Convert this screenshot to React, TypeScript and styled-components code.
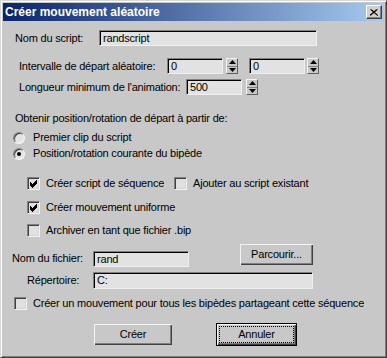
import { createGlobalStyle, styled } from "styled-components";

const GlobalStyle = createGlobalStyle`
  html, body {
    margin: 0;
    padding: 0;
    background: #c8c8c8;
  }
  body {
    font-family: "Liberation Sans", Arial, sans-serif;
    font-size: 11px;
    letter-spacing: -0.2px;
    color: #000;
  }
`;

const Window = styled.div`
  width: 387px;
  height: 358px;
  box-sizing: border-box;
  background: #c8c8c8;
  border-top: 1px solid #d8d8d8;
  border-left: 1px solid #d8d8d8;
  border-right: 1px solid #404040;
  border-bottom: 1px solid #404040;
  box-shadow: inset 1px 1px 0 #ffffff, inset -1px -1px 0 #808080;
  padding: 2px;
  display: flex;
  flex-direction: column;
`;

const TitleBar = styled.div`
  height: 18px;
  display: flex;
  align-items: center;
  justify-content: space-between;
  padding: 0 2px 0 2px;
  background: linear-gradient(to right, #0a246a, #a6caf0);
`;

const Title = styled.span`
  color: #fff;
  font-weight: bold;
  font-size: 12px;
  letter-spacing: 0;
`;

const CloseButton = styled.div`
  width: 16px;
  height: 14px;
  box-sizing: border-box;
  background: #d4d0c8;
  border-top: 1px solid #fff;
  border-left: 1px solid #fff;
  border-right: 1px solid #404040;
  border-bottom: 1px solid #404040;
  box-shadow: inset -1px -1px 0 #808080;
  display: flex;
  align-items: center;
  justify-content: center;
`;

const Body = styled.div`
  display: flex;
  flex-direction: column;
`;

const Row = styled.div<{ $top: number; $indent: number; $height?: number; $align?: string }>`
  display: flex;
  align-items: ${(p) => p.$align ?? "center"};
  margin-top: ${(p) => p.$top}px;
  padding-left: ${(p) => p.$indent}px;
  height: ${(p) => p.$height ?? 13}px;
`;

const Label = styled.span<{ $width?: number }>`
  width: ${(p) => (p.$width ? `${p.$width}px` : "auto")};
  flex: none;
  white-space: nowrap;
  line-height: 13px;
`;

const TextInput = styled.div<{ $width: number; $height?: number; $gap?: number }>`
  width: ${(p) => p.$width}px;
  height: ${(p) => p.$height ?? 16}px;
  margin-left: ${(p) => p.$gap ?? 0}px;
  box-sizing: border-box;
  flex: none;
  background: #e2e2e2;
  border-top: 1px solid #808080;
  border-left: 1px solid #808080;
  border-right: 1px solid #f0f0f0;
  border-bottom: 1px solid #f0f0f0;
  box-shadow: inset 1px 1px 0 #000;
  padding: 0 0 0 3px;
  display: flex;
  align-items: center;
  line-height: 13px;
`;

const Spinner = styled.div<{ $gap: number }>`
  width: 12px;
  height: 16px;
  margin-left: ${(p) => p.$gap}px;
  flex: none;
  box-sizing: border-box;
  background: #c8c8c8;
  border-top: 1px solid #f4f4f4;
  border-left: 1px solid #f4f4f4;
  border-right: 1px solid #606060;
  border-bottom: 1px solid #606060;
  display: flex;
  flex-direction: column;
`;

const SpinHalf = styled.div<{ $divider?: boolean }>`
  flex: 1;
  display: flex;
  align-items: center;
  justify-content: center;
  border-bottom: ${(p) => (p.$divider ? "1px solid #808080" : "none")};
`;

const Box = styled.div<{ $gap?: number }>`
  width: 13px;
  height: 13px;
  flex: none;
  margin-left: ${(p) => p.$gap ?? 0}px;
  margin-right: 6px;
  box-sizing: border-box;
  background: #e0e0e0;
  border-top: 1px solid #808080;
  border-left: 1px solid #808080;
  border-right: 1px solid #f4f4f4;
  border-bottom: 1px solid #f4f4f4;
  box-shadow: inset 1px 1px 0 #404040, inset -1px -1px 0 #d4d4d4;
  display: flex;
  align-items: center;
  justify-content: center;
`;

const Radio = styled.div<{ $on?: boolean }>`
  width: 12px;
  height: 12px;
  flex: none;
  margin-right: 8px;
  box-sizing: border-box;
  border-radius: 50%;
  background: #e4e4e4;
  border-top: 1px solid #808080;
  border-left: 1px solid #808080;
  border-right: 1px solid #f8f8f8;
  border-bottom: 1px solid #f8f8f8;
  box-shadow: inset 1px 1px 0 #404040;
  display: flex;
  align-items: center;
  justify-content: center;
  &::after {
    content: "";
    display: ${(p) => (p.$on ? "block" : "none")};
    width: 4px;
    height: 4px;
    border-radius: 50%;
    background: #000;
  }
`;

const Button = styled.div<{ $width: number; $gap?: number; $focus?: boolean }>`
  width: ${(p) => p.$width}px;
  height: 23px;
  margin-left: ${(p) => p.$gap ?? 0}px;
  flex: none;
  box-sizing: border-box;
  background: #c8c8c8;
  border: 1px solid ${(p) => (p.$focus ? "#000" : "#c8c8c8")};
  box-shadow: inset 1px 1px 0 #f4f4f4, inset -1px -1px 0 #404040, inset -2px -2px 0 #808080;
  display: flex;
  align-items: center;
  justify-content: center;
  padding: 3px;
`;

const ButtonFace = styled.span<{ $focus?: boolean }>`
  flex: 1;
  align-self: stretch;
  display: flex;
  align-items: center;
  justify-content: center;
  outline: ${(p) => (p.$focus ? "1px dotted #000" : "none")};
  line-height: 13px;
`;

const Check = () => (
  <svg width="9" height="9" viewBox="0 0 9 9">
    <path d="M1 3.5 L3.5 6 L8 1.5 M1 4.5 L3.5 7 L8 2.5 M1 5.5 L3.5 8 L8 3.5" stroke="#000" strokeWidth="1" fill="none" shapeRendering="crispEdges" />
  </svg>
);

const Arrow = ({ up }: { up?: boolean }) => (
  <svg width="7" height="4" viewBox="0 0 7 4">
    <path d={up ? "M3.5 0 L7 4 L0 4 Z" : "M0 0 L7 0 L3.5 4 Z"} fill="#000" />
  </svg>
);

const Spin = ({ gap }: { gap: number }) => (
  <Spinner $gap={gap}>
    <SpinHalf $divider>
      <Arrow up />
    </SpinHalf>
    <SpinHalf>
      <Arrow />
    </SpinHalf>
  </Spinner>
);

export default function App() {
  return (
    <>
      <GlobalStyle />
      <Window>
        <TitleBar>
          <Title>Créer mouvement aléatoire</Title>
          <CloseButton>
            <svg width="8" height="7" viewBox="0 0 8 7">
              <path d="M0.5 0.5 L7.5 6.5 M1.5 0.5 L8 6.5 M7.5 0.5 L0.5 6.5 M6.5 0.5 L-0.5 6.5" stroke="#000" strokeWidth="1" />
            </svg>
          </CloseButton>
        </TitleBar>
        <Body>
          <Row $top={9} $indent={12} $height={16}>
            <Label $width={84}>Nom du script:</Label>
            <TextInput $width={218}>randscript</TextInput>
          </Row>
          <Row $top={12} $indent={16} $height={16}>
            <Label $width={148}>Intervalle de départ aléatoire:</Label>
            <TextInput $width={56}>0</TextInput>
            <Spin gap={3} />
            <TextInput $width={56} $gap={11}>0</TextInput>
            <Spin gap={2} />
          </Row>
          <Row $top={5} $indent={16} $height={16}>
            <Label $width={167}>Longueur minimum de l'animation:</Label>
            <TextInput $width={56}>500</TextInput>
            <Spin gap={4} />
          </Row>
          <Row $top={17} $indent={12}>
            <Label>Obtenir position/rotation de départ à partir de:</Label>
          </Row>
          <Row $top={6} $indent={10}>
            <Radio />
            <Label>Premier clip du script</Label>
          </Row>
          <Row $top={3} $indent={10}>
            <Radio $on />
            <Label>Position/rotation courante du bipède</Label>
          </Row>
          <Row $top={17} $indent={24}>
            <Box>
              <Check />
            </Box>
            <Label $width={128}>Créer script de séquence</Label>
            <Box />
            <Label>Ajouter au script existant</Label>
          </Row>
          <Row $top={11} $indent={24}>
            <Box>
              <Check />
            </Box>
            <Label>Créer mouvement uniforme</Label>
          </Row>
          <Row $top={10} $indent={24}>
            <Box />
            <Label>Archiver en tant que fichier .bip</Label>
          </Row>
          <Row $top={6} $indent={9} $height={24} $align="flex-end">
            <Label $width={81} style={{ marginBottom: 2 }}>Nom du fichier:</Label>
            <TextInput $width={96}>rand</TextInput>
            <Button $width={75} $gap={50} style={{ alignSelf: "flex-start" }}>
              <ButtonFace>Parcourir...</ButtonFace>
            </Button>
          </Row>
          <Row $top={5} $indent={24} $height={17}>
            <Label $width={66}>Répertoire:</Label>
            <TextInput $width={220} $height={17}>C:</TextInput>
          </Row>
          <Row $top={8} $indent={11}>
            <Box />
            <Label>Créer un mouvement pour tous les bipèdes partageant cette séquence</Label>
          </Row>
          <Row $top={13} $indent={90} $height={23}>
            <Button $width={80}>
              <ButtonFace>Créer</ButtonFace>
            </Button>
            <Button $width={81} $gap={43} $focus>
              <ButtonFace $focus>Annuler</ButtonFace>
            </Button>
          </Row>
        </Body>
      </Window>
    </>
  );
}
